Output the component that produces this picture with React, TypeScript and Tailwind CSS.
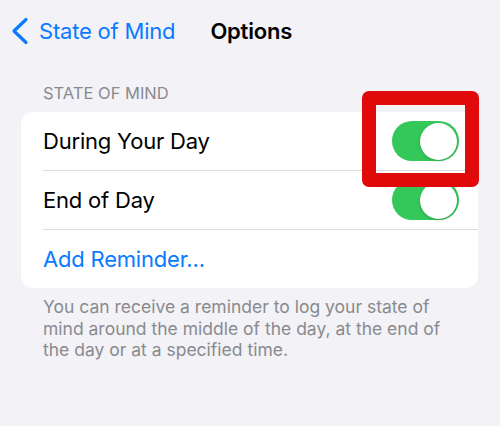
// Settings-style "Options" page with toggle rows
const rows = [
  { label: 'During Your Day', on: true },
  { label: 'End of Day', on: true },
];

function Toggle() {
  return (
    <div className="w-[67px] h-[40px] rounded-full bg-[#34c759] flex items-center justify-end pr-[2px]">
      <div className="w-[37px] h-[37px] rounded-full bg-white shadow-[0_1px_3px_rgba(0,0,0,0.2)]" />
    </div>
  );
}

export default function App() {
  return (
    <div className="w-[500px] h-[426px] bg-[#f2f2f7] overflow-hidden relative" style={{ fontFamily: 'Inter, "Noto Sans", sans-serif' }}>
      {/* Nav bar */}
      <div className="h-[62px] flex items-center">
        <div className="flex items-center text-[#0a7aff] pl-[11px]">
          <svg width="18" height="28" viewBox="0 0 18 28" fill="none">
            <path d="M15 2.5 L3 14 L15 25.5" stroke="currentColor" strokeWidth="3.2" strokeLinecap="round" strokeLinejoin="round" />
          </svg>
          <span className="text-[22px] ml-[10px] tracking-[-0.2px]">State of Mind</span>
        </div>
        <span className="text-[22px] font-semibold text-black ml-[35px] tracking-[-0.2px]">Options</span>
      </div>

      <div className="pt-[21px] px-[21px] w-[499px]">
        <div className="pl-[22px] h-[20px] leading-[20px] text-[16.5px] text-[#8a8a8e] mb-[9px]">STATE OF MIND</div>

        <div className="bg-white rounded-[12px]">
          {rows.map(r => (
            <div key={r.label}>
              <div className="h-[58px] flex items-center justify-between pl-[22px] pr-[19px]">
                <span className="text-[22px] text-black tracking-[-0.2px]">{r.label}</span>
                <Toggle />
              </div>
              <div className="ml-[22px] h-px bg-[#dcdce0]" />
            </div>
          ))}
          <div className="h-[58px] flex items-center pl-[22px]">
            <span className="text-[22px] text-[#0a7aff] tracking-[-0.2px]">Add Reminder...</span>
          </div>
        </div>

        <p className="pl-[22px] w-[430px] mt-[8px] text-[17.5px] leading-[21.5px] text-[#8a8a8e]">
          You can receive a reminder to log your state of mind around the middle of the day, at the end of the day or at a specified time.
        </p>
      </div>

      {/* Red highlight box over the first toggle */}
      <div className="absolute left-[362px] top-[91px] w-[117px] h-[96px] border-[14px] border-[#e00a0a] rounded-[7px]" />
    </div>
  );
}
